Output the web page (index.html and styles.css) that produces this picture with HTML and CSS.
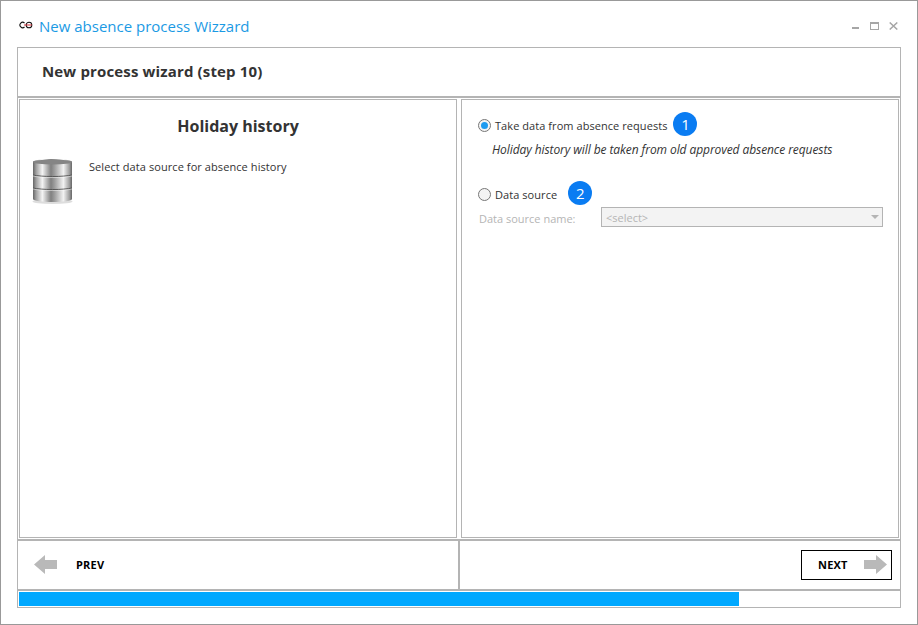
FILE: index.html
```html
<!DOCTYPE html>
<html lang="en">
<head>
    <meta charset="UTF-8">
    <title>New absence process Wizzard</title>
    <link rel="stylesheet" href="styles.css">
</head>
<body>
<div class="window">
    <div class="titlebar">
        <svg class="app-icon" width="14" height="8" viewBox="0 0 14 8">
            <path d="M5.500 2A2.700 2.700 0 1 0 5.500 6" fill="none" stroke="#111" stroke-width="1.100"/>
            <circle cx="10" cy="4" r="2.800" fill="none" stroke="#111" stroke-width="1.100"/>
            <path d="M5 4h8" stroke="#d2323c" stroke-width="1"/>
        </svg>
        <span class="title">New absence process Wizzard</span>
        <div class="controls">
            <svg width="8" height="8" viewBox="0 0 8 8"><rect y="5" width="7" height="2" fill="#a6a6a6"/></svg>
            <svg width="9" height="8" viewBox="0 0 9 8"><rect x=".5" y=".5" width="8" height="7" fill="none" stroke="#a6a6a6"/><rect x="1" y="1" width="7" height="1" fill="#a6a6a6"/></svg>
            <svg width="9" height="8" viewBox="0 0 9 8"><path d="M.7.5l7.600 7M8.300.5L.7 7.500" stroke="#a6a6a6" stroke-width="1.500"/></svg>
        </div>
    </div>

    <div class="shell">
        <div class="heading">New process wizard (step 10)</div>

        <div class="panels">
            <div class="panel">
                <h2 class="panel-title">Holiday history</h2>
                <div class="intro">
                    <svg class="db-icon" width="41" height="46" viewBox="0 0 41 46">
                        <defs>
                            <linearGradient id="metal" x1="0" x2="1" y1="0" y2="0">
                                <stop offset="0" stop-color="#666"/>
                                <stop offset=".08" stop-color="#a0a0a0"/>
                                <stop offset=".24" stop-color="#f4f4f4"/>
                                <stop offset=".46" stop-color="#808080"/>
                                <stop offset=".56" stop-color="#a0a0a0"/>
                                <stop offset=".78" stop-color="#f2f2f2"/>
                                <stop offset=".93" stop-color="#a0a0a0"/>
                                <stop offset="1" stop-color="#666"/>
                            </linearGradient>
                        </defs>
                        <ellipse cx="20.500" cy="42.500" rx="20" ry="2.500" fill="#ddd"/>
                        <path d="M1 3c0-4 39-4 39 0v37c0 4-39 4-39 0z" fill="url(#metal)"/>
                        <ellipse cx="20.500" cy="3" rx="19.500" ry="2.500" fill="#858585"/>
                        <path d="M1 16c8 2 31 2 39 0M1 29c8 2 31 2 39 0" fill="none" stroke="#555" stroke-width="1"/>
                        <path d="M1 17c8 2 31 2 39 0M1 30c8 2 31 2 39 0" fill="none" stroke="#fff" stroke-opacity=".6" stroke-width=".8"/>
                    </svg>
                    <p class="intro-text">Select data source for absence history</p>
                </div>
            </div>

            <div class="panel panel-options">
                <div class="option option-first">
                    <span class="radio radio-on"></span>
                    <span class="option-label">Take data from absence requests</span>
                    <span class="badge">1</span>
                </div>
                <p class="hint">Holiday history will be taken from old approved absence requests</p>
                <div class="option option-second">
                    <span class="radio"></span>
                    <span class="option-label">Data source</span>
                    <span class="badge">2</span>
                </div>
                <div class="source-row">
                    <span class="source-label">Data source name:</span>
                    <div class="combo">
                        <span class="combo-text">&lt;select&gt;</span>
                        <span class="combo-arrow"></span>
                    </div>
                </div>
            </div>
        </div>

        <div class="footer">
            <div class="footer-left">
                <button class="nav-btn" type="button">
                    <svg width="24" height="20" viewBox="0 0 24 20"><polygon points="0,9.500 11,0 11,5 23,5 23,14 11,14 11,19" fill="#b9b9b9"/></svg>
                    <span class="nav-label prev-label">PREV</span>
                </button>
            </div>
            <div class="footer-right">
                <button class="nav-btn next-btn" type="button">
                    <span class="nav-label">NEXT</span>
                    <svg width="24" height="20" viewBox="0 0 24 20"><polygon points="23,9.500 12,0 12,5 0,5 0,14 12,14 12,19" fill="#b9b9b9"/></svg>
                </button>
            </div>
        </div>

        <div class="progress"><div class="progress-bar"></div></div>
    </div>
</div>
</body>
</html>
```

FILE: styles.css
```css
* {
    box-sizing: border-box;
}
body {
    margin: 0;
    font-family: "Open Sans", "Noto Sans", sans-serif;
    background: white;
    color: #333;
}
.window {
    width: 918px;
    height: 625px;
    border: 1px solid #999;
    padding: 0 16px;
    display: flex;
    flex-direction: column;
}
.titlebar {
    height: 46px;
    flex: none;
    display: flex;
    align-items: center;
    padding: 4px 0 0 2px;
}
.app-icon {
    margin-right: 6px;
    margin-top: -3px;
}
.title {
    font-size: 15px;
    color: #1b9ae4;
}
.controls {
    margin-left: auto;
    margin-right: 3px;
    display: flex;
    align-items: center;
    gap: 10px;
    margin-top: -1px;
}
.shell {
    width: 884px;
    height: 561px;
    flex: none;
    border: 1px solid #b4b4b4;
    display: flex;
    flex-direction: column;
}
.heading {
    height: 50px;
    flex: none;
    border-bottom: 2px solid #b4b4b4;
    padding: 0 0 2px 24px;
    display: flex;
    align-items: center;
    font-size: 15px;
    font-weight: 700;
    letter-spacing: 0.15px;
}
.panels {
    height: 441px;
    flex: none;
    padding: 1px;
    display: grid;
    grid-template-columns: 438px 438px;
    gap: 4px;
}
.panel {
    border: 1px solid #b4b4b4;
    min-height: 0;
}
.panel-title {
    margin: 14px 0 0;
    text-align: center;
    font-size: 16px;
    font-weight: 700;
    line-height: 24px;
}
.intro {
    display: flex;
    margin: 21px 0 0 12px;
}
.db-icon {
    flex: none;
}
.intro-text {
    margin: 0 0 0 16px;
    font-size: 11px;
    letter-spacing: 0.08px;
    line-height: 16px;
}
.panel-options {
    padding: 0 15px 0 16px;
    font-size: 11px;
}
.option {
    display: flex;
    align-items: center;
    height: 24px;
}
.option-first {
    margin-top: 12px;
}
.option-second {
    margin-top: 23px;
}
.option-second .badge {
    margin-left: 11px;
}
.radio {
    width: 13px;
    height: 13px;
    border: 1px solid #777;
    border-radius: 50%;
    background: #f4f4f4;
    margin: 2px 4px 0 0;
    display: flex;
    align-items: center;
    justify-content: center;
    flex: none;
}
.radio-on::after {
    content: "";
    width: 7px;
    height: 7px;
    border-radius: 50%;
    background: #1e9bf0;
}
.option-label {
    margin-top: 2px;
    letter-spacing: 0.06px;
}
.badge {
    width: 24px;
    height: 24px;
    border-radius: 50%;
    background: #0a7cf2;
    color: white;
    font-size: 15px;
    display: flex;
    align-items: center;
    justify-content: center;
    margin-left: 6px;
}
.hint {
    margin: 6px 0 0 14px;
    font-size: 12px;
    font-style: italic;
    letter-spacing: -0.08px;
    line-height: 16px;
}
.source-row {
    display: flex;
    align-items: center;
    margin-top: 2px;
    color: #b5b5b5;
}
.source-label {
    width: 122px;
    flex: none;
    margin: 2px 0 0 1px;
}
.combo {
    flex: 1;
    height: 20px;
    border: 1px solid #b4b4b4;
    background: #f3f3f3;
    padding: 0 3px 0 4px;
    display: flex;
    align-items: center;
    justify-content: space-between;
}
.combo-arrow {
    width: 0;
    height: 0;
    border-left: 4px solid transparent;
    border-right: 4px solid transparent;
    border-top: 4px solid #b4b4b4;
}
.footer {
    height: 52px;
    flex: none;
    border-top: 2px solid #b4b4b4;
    border-bottom: 2px solid #b4b4b4;
    display: grid;
    grid-template-columns: 440px 1fr;
}
.footer-left {
    padding-left: 15px;
    display: flex;
    align-items: center;
}
.footer-right {
    border-left: 2px solid #b4b4b4;
    padding-right: 8px;
    display: flex;
    align-items: center;
    justify-content: flex-end;
}
.nav-btn {
    height: 30px;
    border: 1px solid transparent;
    background: none;
    padding: 0;
    display: flex;
    align-items: center;
    font: 700 11px "Open Sans", "Noto Sans", sans-serif;
    letter-spacing: 0.2px;
    color: #000;
}
.nav-label {
    margin-bottom: 2px;
}
.prev-label {
    margin-left: 18px;
}
.next-btn {
    width: 91px;
    border-color: #000;
    padding: 0 3px 0 16px;
    justify-content: space-between;
}
.progress {
    flex: 1;
    padding: 1px;
}
.progress-bar {
    width: 720px;
    height: 100%;
    background: #00a8ff;
}
```
